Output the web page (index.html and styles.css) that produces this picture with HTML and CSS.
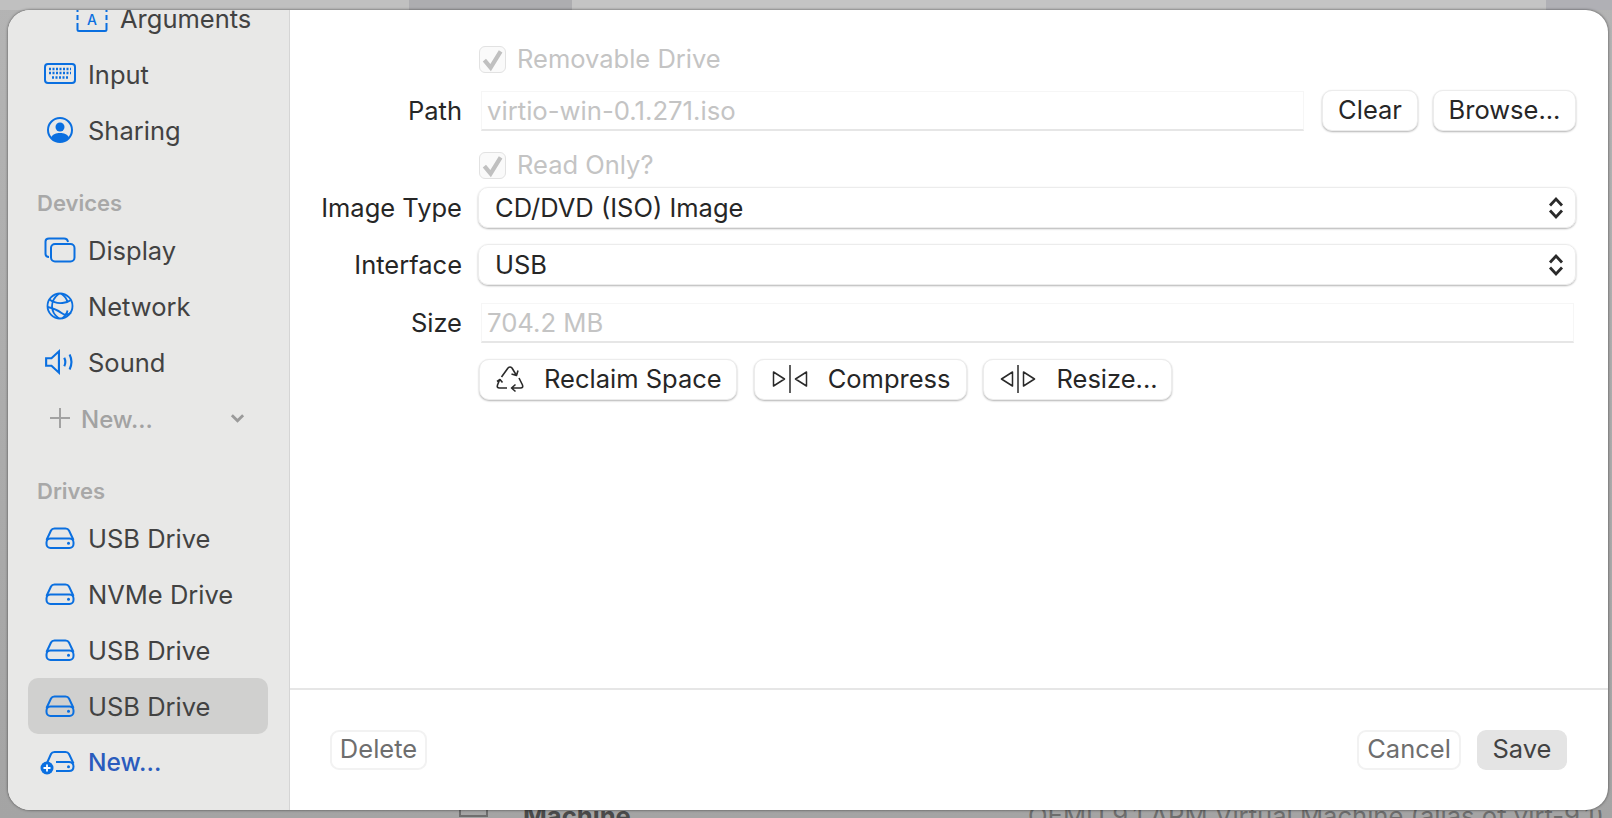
FILE: index.html
```html
<!DOCTYPE html>
<html lang="en">

<head>
    <meta charset="UTF-8">
    <meta name="viewport" content="width=device-width, initial-scale=1.0">
    <title>Drive Settings</title>
    <link rel="stylesheet" href="styles.css">
</head>

<body>
    <!-- window behind the sheet -->
    <div class="backdrop">
        <div class="backdrop-top">
            <div class="backdrop-left"></div>
            <div class="backdrop-band"></div>
            <div class="backdrop-title"></div>
            <div class="backdrop-right"></div>
        </div>
        <div class="backdrop-row">
            <span class="backdrop-check"></span>
            <span class="backdrop-name">Machine</span>
            <span class="backdrop-value">QEMU 9.1 ARM Virtual Machine (alias of virt-9.1)</span>
        </div>
    </div>

    <div class="sheet">
        <aside class="sidebar">
            <ul class="side-list">
                <li class="side-item side-sub">
                    <svg class="side-icon" viewBox="0 0 32 26"><path d="M1.500 4v2M1.500 9v5M1.500 17v6.500q0 1.500 1.500 1.500h26q1.500 0 1.500-1.500V17M30.500 14V9M30.500 6V4"/><text x="16" y="19" class="icon-letter">A</text></svg>
                    <span>Arguments</span>
                </li>
                <li class="side-item">
                    <svg class="side-icon" viewBox="0 0 32 22"><rect x="1" y="1" width="30" height="19" rx="3"/><path class="keys" d="M5 6h22M5 10h22M8 14.500h16"/></svg>
                    <span>Input</span>
                </li>
                <li class="side-item">
                    <svg class="side-icon" viewBox="0 0 28 28"><circle cx="14" cy="14" r="12"/><circle class="solid" cx="14" cy="11" r="4.500"/><path class="solid" d="M5 21.500c2-3.500 5-4.500 9-4.500s7 1 9 4.500c-2 3-5.500 4.500-9 4.500s-7-1.500-9-4.500z"/></svg>
                    <span>Sharing</span>
                </li>
            </ul>

            <h3 class="side-heading">Devices</h3>
            <ul class="side-list">
                <li class="side-item">
                    <svg class="side-icon" viewBox="0 0 32 26"><path d="M5 20q-3.500 0-3.500-3.500V4.500Q1.500 1.500 5 1.500h15q3.500 0 4 3.500"/><rect x="7" y="7" width="23.500" height="17.500" rx="4"/></svg>
                    <span>Display</span>
                </li>
                <li class="side-item">
                    <svg class="side-icon globe" viewBox="0 0 28 28"><circle cx="14" cy="14" r="12.500"/><path d="M13 1.500c-5 4-7 8-7 12.500s2 9 7 12.500M15 1.500c3 2 6 5 6.500 9M16 26.500c3-2 5-5 5.500-8M3.500 7.500c4 3 9 4 13 3.500s6-1 8.500-3M1.500 15c5 1 10 3 14 6s7 2 9.500-.5"/></svg>
                    <span>Network</span>
                </li>
                <li class="side-item">
                    <svg class="side-icon" viewBox="0 0 30 24"><path d="M2 8.500h5L14 2v20l-7-6.500H2z"/><path d="M19 8q2 4 0 8M24 5q3.500 7 0 14"/></svg>
                    <span>Sound</span>
                </li>
                <li class="side-item side-new">
                    <svg class="plus-icon" viewBox="0 0 22 22"><path d="M11 1v20M1 11h20"/></svg>
                    <span class="side-new-label">New...</span>
                    <svg class="chev-icon" viewBox="0 0 16 10"><path d="M2 2l6 6 6-6"/></svg>
                </li>
            </ul>

            <h3 class="side-heading">Drives</h3>
            <ul class="side-list drive-list">
                <li class="side-item">
                    <svg class="side-icon drive-icon" viewBox="0 0 30 22"><path d="M1.500 13L6 3.500Q7 1.500 9.500 1.500h11q2.500 0 3.500 2L28.500 13"/><rect x="1.500" y="11.500" width="27" height="9.500" rx="4"/><circle class="solid" cx="23.500" cy="16.200" r="1.500"/></svg>
                    <span>USB Drive</span>
                </li>
                <li class="side-item">
                    <svg class="side-icon drive-icon" viewBox="0 0 30 22"><path d="M1.500 13L6 3.500Q7 1.500 9.500 1.500h11q2.500 0 3.500 2L28.500 13"/><rect x="1.500" y="11.500" width="27" height="9.500" rx="4"/><circle class="solid" cx="23.500" cy="16.200" r="1.500"/></svg>
                    <span>NVMe Drive</span>
                </li>
                <li class="side-item">
                    <svg class="side-icon drive-icon" viewBox="0 0 30 22"><path d="M1.500 13L6 3.500Q7 1.500 9.500 1.500h11q2.500 0 3.500 2L28.500 13"/><rect x="1.500" y="11.500" width="27" height="9.500" rx="4"/><circle class="solid" cx="23.500" cy="16.200" r="1.500"/></svg>
                    <span>USB Drive</span>
                </li>
                <li class="side-item selected">
                    <svg class="side-icon drive-icon" viewBox="0 0 30 22"><path d="M1.500 13L6 3.500Q7 1.500 9.500 1.500h11q2.500 0 3.500 2L28.500 13"/><rect x="1.500" y="11.500" width="27" height="9.500" rx="4"/><circle class="solid" cx="23.500" cy="16.200" r="1.500"/></svg>
                    <span>USB Drive</span>
                </li>
                <li class="side-item side-add">
                    <svg class="side-icon add-icon" viewBox="0 0 36 24"><path d="M7 13L11 4Q12 2 14.500 2h11q2.500 0 3.500 2L33.500 13.500"/><path d="M16 12h13q4.500 0 4.500 4.500T29 21H16"/><circle class="solid" cx="28.500" cy="16.700" r="1.500"/><circle class="solid" cx="7" cy="18" r="6.500"/><path class="plus-white" d="M7 14.500v7M3.500 18h7"/></svg>
                    <span>New...</span>
                </li>
            </ul>
        </aside>

        <main class="content">
            <div class="form">
                <div class="form-row">
                    <div class="form-label"></div>
                    <label class="check">
                        <span class="check-box"><svg viewBox="0 0 20 20"><path d="M3.500 10.500l5 6L16.500 3.500"/></svg></span>
                        Removable Drive
                    </label>
                </div>
                <div class="form-row row-path">
                    <div class="form-label">Path</div>
                    <div class="readonly-field">virtio-win-0.1.271.iso</div>
                    <button class="btn btn-clear">Clear</button>
                    <button class="btn btn-browse">Browse...</button>
                </div>
                <div class="form-row row-check-second">
                    <div class="form-label"></div>
                    <label class="check">
                        <span class="check-box"><svg viewBox="0 0 20 20"><path d="M3.500 10.500l5 6L16.500 3.500"/></svg></span>
                        Read Only?
                    </label>
                </div>
                <div class="form-row row-select">
                    <div class="form-label">Image Type</div>
                    <div class="select">
                        <span>CD/DVD (ISO) Image</span>
                        <svg class="updown" viewBox="0 0 16 24"><path d="M2 9.500L8 3l6 6.500M2 14.500L8 21l6-6.500"/></svg>
                    </div>
                </div>
                <div class="form-row row-select row-interface">
                    <div class="form-label">Interface</div>
                    <div class="select">
                        <span>USB</span>
                        <svg class="updown" viewBox="0 0 16 24"><path d="M2 9.500L8 3l6 6.500M2 14.500L8 21l6-6.500"/></svg>
                    </div>
                </div>
                <div class="form-row row-size">
                    <div class="form-label">Size</div>
                    <div class="readonly-field size-field">704.2 MB</div>
                </div>
                <div class="form-row row-actions">
                    <div class="form-label"></div>
                    <div class="actions">
                        <button class="btn btn-reclaim">
                            <svg class="btn-icon recycle" viewBox="0 0 28 28"><path d="M5.500 12L12 3q2-2 4 0l4.500 7.500M15.500 9l5 1.500 1.500-5"/><path d="M23 13l3.500 7q1 3-2 3H16M19.500 19.500L15.500 23l4 3.500"/><path d="M11 23H3.500q-3 0-2-3l2-5M1 16.500l3-2 2.500 3"/></svg>
                            Reclaim Space
                        </button>
                        <button class="btn btn-compress">
                            <svg class="btn-icon squeeze" viewBox="0 0 36 28"><path d="M18 0v28"/><path d="M1.500 7l11 7-11 7zM34.500 7l-11 7 11 7z"/></svg>
                            Compress
                        </button>
                        <button class="btn btn-resize">
                            <svg class="btn-icon squeeze" viewBox="0 0 36 28"><path d="M18 0v28"/><path d="M12.500 7l-11 7 11 7zM23.500 7l11 7-11 7z"/></svg>
                            Resize...
                        </button>
                    </div>
                </div>
            </div>

            <footer class="footer">
                <button class="btn-flat btn-delete">Delete</button>
                <div class="footer-right">
                    <button class="btn-flat btn-cancel">Cancel</button>
                    <button class="btn-save">Save</button>
                </div>
            </footer>
        </main>
    </div>
</body>

</html>
```
FILE: styles.css
```css
/* Page and the window behind */
* {
    box-sizing: border-box;
}

html,
body {
    margin: 0;
    height: 100%;
    overflow: hidden;
}

body {
    position: relative;
    font-family: Inter, "Liberation Sans", sans-serif;
    color: #262626;
}

.backdrop {
    position: absolute;
    inset: 0;
    display: flex;
    flex-direction: column;
    justify-content: space-between;
    background: linear-gradient(#b4b4b4, #a4a4a4);
}

.backdrop-top {
    display: flex;
    height: 10px;
}

.backdrop-left {
    width: 409px;
    background-color: #c0c0c0;
}

.backdrop-band {
    width: 163px;
    background-color: #adadb0;
}

.backdrop-title {
    width: 974px;
    background-color: #c4c4c4;
}

.backdrop-right {
    flex: 1;
    background-color: #b0b0b5;
}

.backdrop-row {
    display: flex;
    align-items: flex-start;
    height: 8px;
    padding-left: 459px;
    overflow: hidden;
    font-size: 25.6px;
    line-height: 12px;
    color: #4a4a4a;
}

.backdrop-check {
    width: 29px;
    height: 7px;
    margin-right: 35px;
    border: 2px solid #6e6e6e;
    border-top: none;
}

.backdrop-name {
    width: 505px;
    font-weight: 700;
}

.backdrop-value {
    color: #6d6d6d;
    white-space: nowrap;
}

/* The sheet */
.sheet {
    position: absolute;
    left: 8px;
    top: 10px;
    width: 1600px;
    height: 800px;
    display: flex;
    border-radius: 22px;
    overflow: hidden;
    background-color: #fff;
    box-shadow: 0 0 3px rgba(0, 0, 0, 0.6);
}

/* Sidebar */
.sidebar {
    width: 282px;
    flex-shrink: 0;
    padding: 0 21px 0 20px;
    background-color: #e8e8e7;
    border-right: 1px solid #d5d5d5;
    overflow: hidden;
}

.side-list {
    list-style: none;
    margin: 0;
    padding: 0;
}

.side-item {
    display: flex;
    align-items: center;
    height: 56px;
    padding-left: 16px;
    border-radius: 10px;
    font-size: 25.5px;
    color: #424242;
}

.side-sub {
    margin-top: -20px;
    padding-left: 48px;
}

.side-sub .side-icon {
    margin-top: 2px;
}

.side-icon {
    width: 32px;
    height: 28px;
    margin-right: 12px;
    flex-shrink: 0;
    fill: none;
    stroke: #0a6fe0;
    stroke-width: 2;
}

.side-icon .solid {
    fill: #0a6fe0;
    stroke: none;
}

.side-icon .keys {
    stroke-width: 2.500;
    stroke-dasharray: 2 1.500;
}

.globe {
    stroke-width: 1.800;
}

.drive-icon {
    width: 30px;
    height: 22px;
    margin: 0 13px 0 1px;
}

.drive-list .side-item span {
    padding-top: 1px;
}

.icon-letter {
    font-size: 14px;
    font-weight: 500;
    fill: #0a6fe0;
    stroke: none;
    text-anchor: middle;
}

.selected {
    background-color: #d0d0cf;
}

.side-heading {
    margin: 28px 0 0 9px;
    height: 36px;
    font-size: 22px;
    font-weight: 600;
    line-height: 35px;
    color: #a8a8a8;
}

.side-new {
    font-size: 24px;
    color: #a2a2a2;
    font-weight: 500;
}

.side-new-label {
    flex: 1;
    padding-top: 2px;
}

.plus-icon {
    width: 22px;
    height: 22px;
    margin: 0 10px 0 5px;
    fill: none;
    stroke: #a2a2a2;
    stroke-width: 2;
}

.chev-icon {
    width: 15px;
    height: 10px;
    margin-right: 23px;
    fill: none;
    stroke: #9a9a9a;
    stroke-width: 3;
}

.side-add {
    padding-left: 12px;
    font-size: 24.5px;
    color: #2a5bbd;
    font-weight: 500;
}

.drive-list .side-add span {
    padding-top: 0;
}

.add-icon {
    width: 36px;
}

.add-icon .plus-white {
    stroke: #fff;
    stroke-width: 1.800;
}

/* Form */
.content {
    flex: 1;
    display: flex;
    flex-direction: column;
    min-width: 0;
}

.form {
    flex: 1;
    padding: 34px 32px 0 0;
}

.form-row {
    display: flex;
    align-items: center;
    font-size: 25.5px;
    line-height: 30px;
}

.form-label {
    width: 172px;
    margin-right: 17px;
    flex-shrink: 0;
    text-align: right;
    color: #262626;
}

.check {
    display: flex;
    align-items: center;
    color: #c4c4c4;
}

.check-box {
    width: 27px;
    height: 27px;
    margin-right: 11px;
    border: 1px solid #e2e2e2;
    border-radius: 6px;
    background-color: #fafafa;
}

.check-box svg {
    display: block;
    width: 25px;
    height: 25px;
    fill: none;
    stroke: #c0c0c0;
    stroke-width: 3.400;
}

.row-path {
    margin-top: 16px;
}

.readonly-field {
    flex: 1;
    height: 40px;
    margin: 0 18px 0 2px;
    padding-left: 5px;
    border: 1px solid #f6f6f6;
    border-bottom: 2px solid #e6e6e6;
    font-size: 25.7px;
    line-height: 38px;
    color: #c4c4c4;
}

.btn {
    display: inline-flex;
    align-items: center;
    height: 41px;
    padding: 0 16px 2px;
    border: 1px solid #ececec;
    border-radius: 10px;
    background-color: #fff;
    box-shadow: 0 1px 2px rgba(0, 0, 0, 0.3);
    font-family: inherit;
    font-size: 25.5px;
    color: #262626;
}

.btn-clear {
    width: 96px;
    margin-right: 15px;
    padding: 0 0 2px;
    justify-content: center;
}

.btn-browse {
    width: 143px;
    padding: 0 0 2px;
    justify-content: center;
}

.row-check-second {
    margin-top: 19px;
}

.row-select {
    margin-top: 7px;
}

.row-interface {
    margin-top: 16px;
}

.select {
    flex: 1;
    display: flex;
    align-items: center;
    justify-content: space-between;
    height: 41px;
    margin-left: -1px;
    padding: 0 11px 0 16px;
    border: 1px solid #ececec;
    border-radius: 10px;
    box-shadow: 0 1px 2px rgba(0, 0, 0, 0.3);
}

.updown {
    width: 16px;
    height: 24px;
    fill: none;
    stroke: #2a2a2a;
    stroke-width: 2.800;
}

.row-size {
    margin-top: 18px;
}

.size-field {
    margin-right: 2px;
}

.row-actions {
    margin-top: 16px;
}

.actions {
    display: flex;
    gap: 16px;
}

.btn-icon {
    margin-right: 20px;
    fill: none;
    stroke: #2a2a2a;
}

.btn-icon path {
    stroke-linejoin: round;
}

.recycle {
    width: 28px;
    height: 28px;
    stroke-width: 1.600;
}

.squeeze {
    width: 36px;
    height: 28px;
    stroke-width: 1.500;
}

.btn-reclaim {
    padding-right: 14px;
}

.btn-compress {
    margin-left: 1px;
    padding: 0 16px 2px 17px;
}

.btn-resize {
    padding-right: 13px;
}

/* Footer buttons */
.footer {
    display: flex;
    justify-content: space-between;
    align-items: center;
    height: 122px;
    padding: 0 41px 0 40px;
    border-top: 2px solid #e6e6e6;
}

.footer-right {
    display: flex;
    gap: 16px;
}

.btn-flat,
.btn-save {
    height: 40px;
    padding: 0 0 3px;
    border-radius: 9px;
    font-family: inherit;
    font-size: 25.5px;
    color: #6e6e6e;
    background: #fff;
    border: 2px solid #f2f2f2;
}

.btn-delete {
    width: 97px;
}

.btn-cancel {
    width: 104px;
}

.btn-save {
    width: 90px;
    border: none;
    background-color: #e4e4e4;
    color: #424242;
}
```
